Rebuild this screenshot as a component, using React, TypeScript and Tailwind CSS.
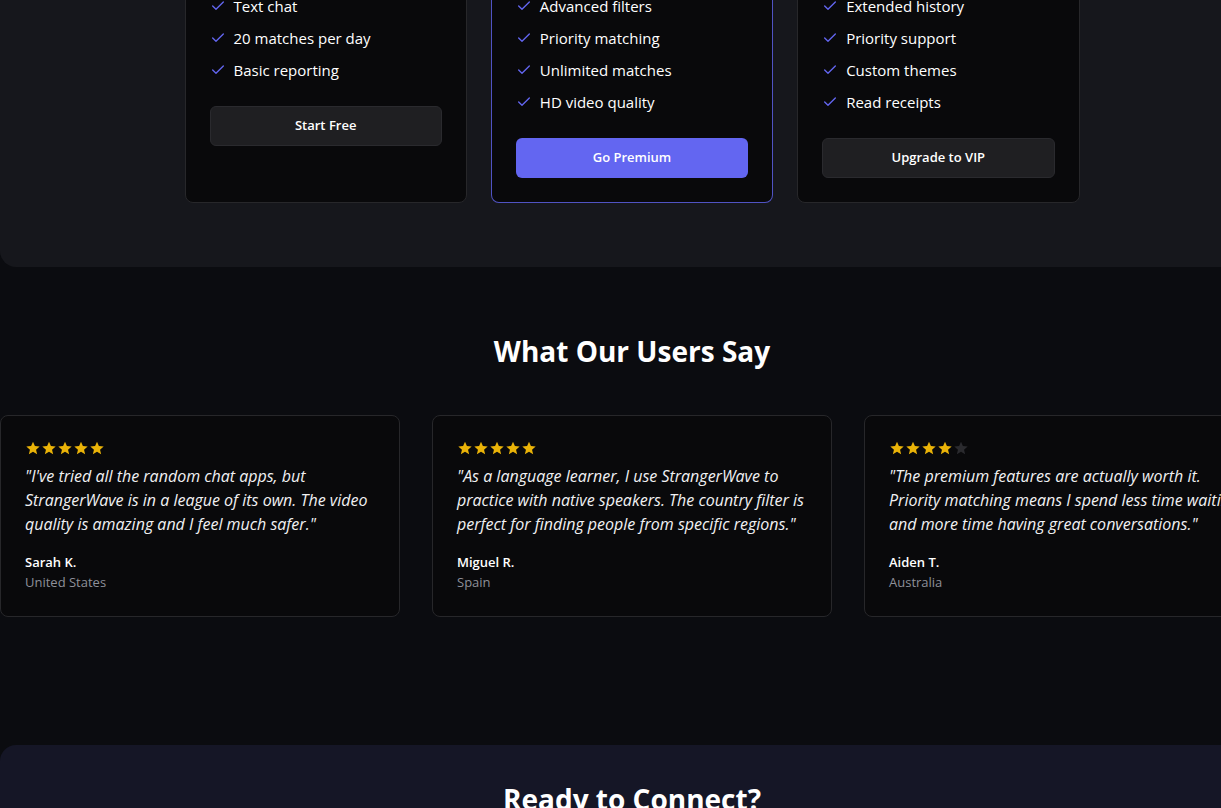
import React from "react";
import { Check } from "lucide-react";

type Plan = {
  name: string;
  features: string[];
  cta: string;
  featured?: boolean;
};

type Review = {
  quote: string;
  name: string;
  country: string;
  rating: number;
};

const plans: Plan[] = [
  {
    name: "Free",
    features: ["Text chat", "20 matches per day", "Basic reporting"],
    cta: "Start Free",
  },
  {
    name: "Premium",
    features: ["Advanced filters", "Priority matching", "Unlimited matches", "HD video quality"],
    cta: "Go Premium",
    featured: true,
  },
  {
    name: "VIP",
    features: ["Extended history", "Priority support", "Custom themes", "Read receipts"],
    cta: "Upgrade to VIP",
  },
];

const reviews: Review[] = [
  {
    quote:
      "\"I've tried all the random chat apps, but StrangerWave is in a league of its own. The video quality is amazing and I feel much safer.\"",
    name: "Sarah K.",
    country: "United States",
    rating: 5,
  },
  {
    quote:
      "\"As a language learner, I use StrangerWave to practice with native speakers. The country filter is perfect for finding people from specific regions.\"",
    name: "Miguel R.",
    country: "Spain",
    rating: 5,
  },
  {
    quote:
      "\"The premium features are actually worth it. Priority matching means I spend less time waiting and more time having great conversations.\"",
    name: "Aiden T.",
    country: "Australia",
    rating: 4,
  },
];

const StarIcon: React.FC<{ filled: boolean }> = ({ filled }) => (
  <svg viewBox="0 0 24 24" className={`w-4 h-4 ${filled ? "text-[#eab308]" : "text-[#2a2a2e]"}`}>
    <path
      fill="currentColor"
      d="M12 2.5l2.85 6.6 7.15.62-5.42 4.72 1.63 7.06L12 17.77 5.79 21.5l1.63-7.06L2 9.72l7.15-.62z"
    />
  </svg>
);

const PlanCard: React.FC<{ plan: Plan }> = ({ plan }) => (
  <div
    className={`rounded-lg border bg-[#09090b] p-6 ${
      plan.featured ? "border-[#6366f1]/80" : "border-[#27272a]"
    }`}
  >
    <ul className="space-y-2 mb-6">
      {plan.features.map((f) => (
        <li key={f} className="flex items-center gap-2 h-6 text-[15px] text-white">
          <Check className="w-4 h-4 text-[#6366f1] shrink-0" strokeWidth={2} />
          <span>{f}</span>
        </li>
      ))}
    </ul>
    <button
      className={`w-full h-10 rounded-md text-[13px] font-semibold text-white ${
        plan.featured ? "bg-[#6366f1]" : "bg-[#1f1f22] border border-[#2a2a2e]"
      }`}
    >
      {plan.cta}
    </button>
  </div>
);

const ReviewCard: React.FC<{ review: Review }> = ({ review }) => (
  <div className="rounded-lg border border-[#27272a] bg-[#09090b] p-6">
    <div className="flex mb-2">
      {[1, 2, 3, 4, 5].map((i) => (
        <StarIcon key={i} filled={i <= review.rating} />
      ))}
    </div>
    <p className="italic text-base leading-6 text-[#f1f1f3] mb-4">{review.quote}</p>
    <p className="text-[13px] font-semibold text-white leading-5">{review.name}</p>
    <p className="text-[13px] text-[#8e9099] leading-5">{review.country}</p>
  </div>
);

export default function App() {
  return (
    <div
      className="h-[808px] w-full overflow-hidden bg-[#0b0c10] text-white"
      style={{ fontFamily: '"Open Sans", "Noto Sans", sans-serif' }}
    >
      <div className="w-[1264px] -mt-[31px]">
        <section className="bg-[#16171c] rounded-b-2xl pb-16">
          <div className="mx-auto max-w-[895px] grid grid-cols-3 gap-6 items-stretch">
            {plans.map((p) => (
              <PlanCard key={p.name} plan={p} />
            ))}
          </div>
        </section>

        <section className="pt-16 pb-16">
          <h2 className="text-[28px] leading-9 font-bold text-center mb-12 translate-y-0.5">
            What Our Users Say
          </h2>
          <div className="grid grid-cols-3 gap-8">
            {reviews.map((r) => (
              <ReviewCard key={r.name} review={r} />
            ))}
          </div>
        </section>

        <section className="mt-16 bg-[#151626] rounded-t-2xl pt-9 px-8 pb-8">
          <h2 className="text-[28px] leading-9 font-bold text-center">Ready to Connect?</h2>
        </section>
      </div>
    </div>
  );
}
